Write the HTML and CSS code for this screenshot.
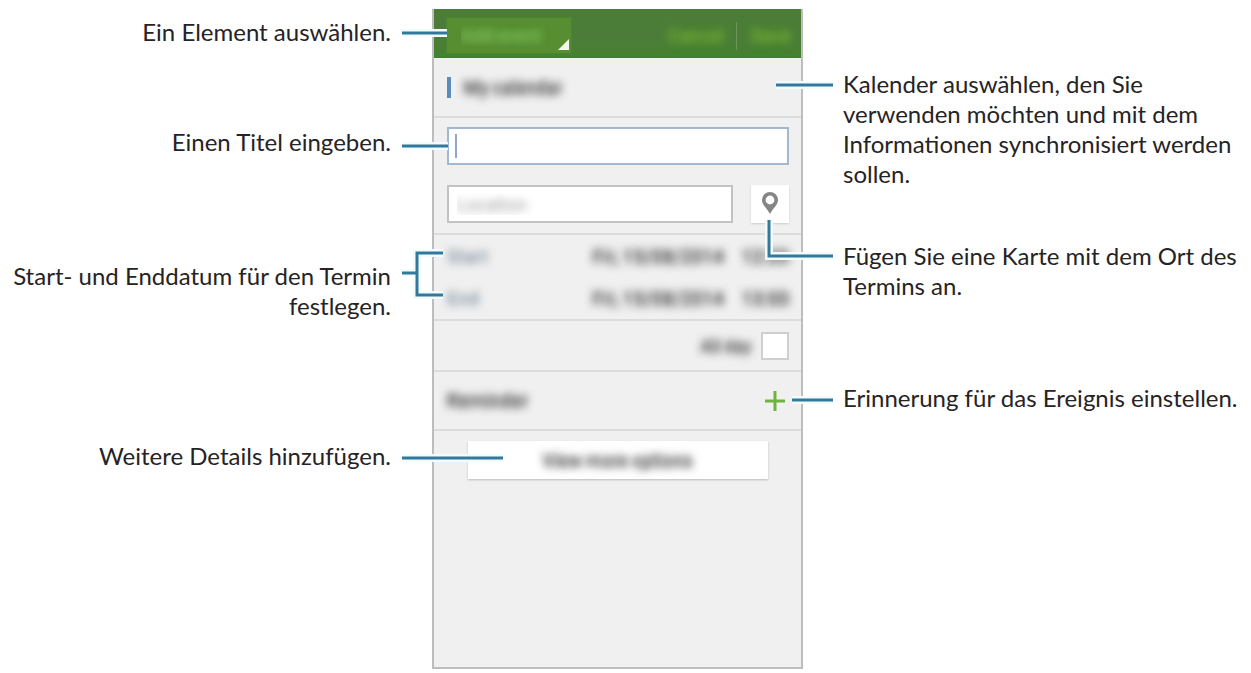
FILE: index.html
```
<!DOCTYPE html>
<html lang="de">
<head>
  <meta charset="UTF-8" />
  <meta name="viewport" content="width=device-width, initial-scale=1.0"/>
  <title>Termin erstellen</title>
  <link rel="stylesheet" href="styles.css">
</head>
<body>

  <main class="guide">
    <div class="notes notes-left">
      <p class="note-item">Ein Element auswählen.</p>
      <p class="note-title">Einen Titel eingeben.</p>
      <p class="note-dates">Start- und Enddatum für den Termin<br>festlegen.</p>
      <p class="note-more">Weitere Details hinzufügen.</p>
    </div>

    <form class="phone">
      <header class="bar">
        <div class="picker">
          <select class="soft" aria-label="Add event">
            <option>Add event</option>
          </select>
        </div>
        <div class="actions">
          <button type="button" class="soft">Cancel</button>
          <button type="button" class="soft">Save</button>
        </div>
      </header>

      <button type="button" class="row calendar"><span class="soft">My calendar</span></button>

      <div class="fields">
        <div class="title-field">
          <input type="text" aria-label="Title">
        </div>
        <div class="location">
          <input type="text" class="soft" aria-label="Location" placeholder="Location">
          <button type="button" class="map" aria-label="Map">
            <svg width="18" height="24" viewBox="0 0 18 24">
              <path fill="#858585" fill-rule="evenodd" d="M9 1a8 8 0 0 0-8 8c0 5 5 8 8 14 3-6 8-9 8-14a8 8 0 0 0-8-8zm0 3.600a4.400 4.400 0 1 1 0 8.800a4.400 4.400 0 0 1 0-8.800z"/>
            </svg>
          </button>
        </div>
      </div>

      <div class="dates">
        <div class="date">
          <span class="soft name">Start</span>
          <button type="button" class="soft">Fri, 15/08/2014</button>
          <button type="button" class="soft">12:00</button>
        </div>
        <div class="date">
          <span class="soft name">End</span>
          <button type="button" class="soft">Fri, 15/08/2014</button>
          <button type="button" class="soft">13:00</button>
        </div>
      </div>

      <div class="row allday">
        <label class="soft" for="allday">All day</label>
        <input type="checkbox" id="allday">
      </div>

      <div class="row reminder">
        <span class="soft">Reminder</span>
        <button type="button" aria-label="Add reminder">
          <svg width="20" height="20" viewBox="0 0 20 20">
            <path d="M10 0v20M0 10h20" stroke="#6db33f" stroke-width="3"/>
          </svg>
        </button>
      </div>

      <button type="button" class="more soft">View more options</button>

      <!-- leader lines: white edge first, blue line on top -->
      <svg class="leads" viewBox="0 0 367 658" preserveAspectRatio="none" aria-hidden="true">
        <defs>
          <path id="lines" vector-effect="non-scaling-stroke" d="M-32 24H13M-32 137H14M-32 264H-17M9 244H-17V286H9M-32 449H69M342 76H399M335 211V247H399M358 391H399"/>
        </defs>
        <use href="#lines" class="edge"/>
        <use href="#lines" class="line"/>
      </svg>
    </form>

    <div class="notes notes-right">
      <p class="note-calendar">Kalender auswählen, den Sie<br>verwenden möchten und mit dem<br>Informationen synchronisiert werden<br>sollen.</p>
      <p class="note-map">Fügen Sie eine Karte mit dem Ort des<br>Termins an.</p>
      <p class="note-reminder">Erinnerung für das Ereignis einstellen.</p>
    </div>
  </main>

</body>
</html>
```
FILE: styles.css
```
* {
  box-sizing: border-box;
}

body {
  margin: 0;
  background: #fff;
  color: #262324;
  font-family: Lato, "Open Sans", sans-serif;
}

.guide {
  display: grid;
  grid-template-columns: 432fr 371fr 448fr;
  align-items: start;
}

/* notes on both sides */
.notes {
  min-width: 0;
  font-size: 24px;
  line-height: 30px;
  white-space: nowrap;
}

.notes p {
  margin: 0;
}

.notes-left {
  padding: 17px 41px 0 0;
  display: flex;
  flex-direction: column;
  align-items: flex-end;
  text-align: right;
}

.notes-right {
  padding: 69px 0 0 40px;
}

.notes .note-title {
  margin-top: 80px;
}

.notes .note-dates {
  margin-top: 104px;
}

.notes .note-more {
  margin-top: 120px;
}

.notes .note-map {
  margin-top: 52px;
}

.notes .note-reminder {
  margin-top: 82px;
}

/* phone */
.phone {
  position: relative;
  min-width: 0;
  min-height: 660px;
  margin-top: 9px;
  border: 2px solid #bdbdbd;
  border-top: 0;
  background: #f0f0f0;
  font-family: Roboto, sans-serif;
  font-size: 18px;
}

.phone button,
.phone input,
.phone select {
  font: inherit;
  border: 0;
  border-radius: 0;
  padding: 0;
  margin: 0;
  background: none;
}

/* out of focus text */
.phone .soft,
.phone .soft::placeholder {
  color: transparent;
  text-shadow: 0 0 8px #555, 0 0 9px #777;
}

.bar {
  display: flex;
  justify-content: space-between;
  align-items: center;
  height: 49px;
  padding: 4px 9px 0 13px;
  background: linear-gradient(#4c7d38 60%, #43822f);
}

.picker {
  position: relative;
  width: 124px;
  height: 35px;
  background: #568e31;
  box-shadow: 0 0 1px 1px #4a8430;
}

.picker::after {
  content: "";
  position: absolute;
  right: 2px;
  bottom: 3px;
  border-left: 11px solid transparent;
  border-bottom: 11px solid #f2f8ec;
}

.phone .picker select {
  appearance: none;
  width: 100%;
  height: 100%;
  padding: 0 14px;
  text-shadow: 0 0 8px #7fbb58, 0 0 9px #7fbb58;
}

.actions {
  display: flex;
}

.phone .actions button {
  height: 28px;
  padding: 0 12px;
  text-shadow: 0 0 8px #6fae35, 0 0 9px #6fae35;
}

.phone .actions button + button {
  padding-left: 15px;
  padding-right: 2px;
  border-left: 1px solid #6b9658;
}

.row,
.phone .calendar {
  display: flex;
  align-items: center;
  width: 100%;
  padding: 0 13px;
  border-bottom: 2px solid #dcdcdc;
}

.phone .calendar {
  height: 60px;
  gap: 13px;
}

.calendar::before {
  content: "";
  width: 4px;
  height: 21px;
  background: #5b8db8;
}

.fields {
  padding: 9px 12px 10px 13px;
  border-bottom: 2px solid #dcdcdc;
}

.title-field {
  position: relative;
}

.title-field::before {
  content: "";
  position: absolute;
  left: 8px;
  top: 7px;
  width: 2px;
  height: 24px;
  background: #92a5cc;
}

.phone .fields input {
  display: block;
  width: 100%;
  height: 38px;
  padding: 0 8px;
  border: 2px solid #c2c2c2;
  background: #fff;
}

.phone .title-field input {
  border-color: #a3b8d0;
}

.location {
  display: flex;
  gap: 18px;
  margin-top: 20px;
}

.phone .location input::placeholder {
  text-shadow: 0 0 8px #999;
}

.phone .map {
  flex: 0 0 38px;
  height: 38px;
  padding-bottom: 3px;
  background: #fff;
  box-shadow: 0 1px 2px #ccc;
}

.map svg {
  display: block;
  margin: 0 auto;
}

.dates {
  padding: 0 12px 0 13px;
  border-bottom: 2px solid #dcdcdc;
}

.date {
  display: flex;
  align-items: center;
  gap: 18px;
  height: 42px;
  font-size: 19px;
}

.phone .date .name {
  flex: 1;
  text-shadow: 0 0 8px #5f7387;
}

.row.allday {
  justify-content: flex-end;
  gap: 10px;
  height: 51px;
  padding-right: 12px;
  font-size: 17px;
}

.phone .allday input {
  appearance: none;
  width: 28px;
  height: 28px;
  border: 2px solid #cfcfcf;
  background: #fff;
}

.row.reminder {
  justify-content: space-between;
  height: 59px;
  padding-right: 16px;
  font-size: 19px;
}

.reminder svg {
  display: block;
}

.phone .more {
  display: block;
  width: calc(100% - 67px);
  height: 38px;
  margin: 10px auto 0;
  background: #fff;
  box-shadow: 0 1px 2px #bbb;
}

/* leader lines */
.leads {
  position: absolute;
  top: 0;
  left: 0;
  width: 100%;
  height: 100%;
  overflow: visible;
  fill: none;
  pointer-events: none;
}

.edge {
  stroke: #f4fbfd;
  stroke-width: 8px;
}

.line {
  stroke: #30789c;
  stroke-width: 3px;
}
```
